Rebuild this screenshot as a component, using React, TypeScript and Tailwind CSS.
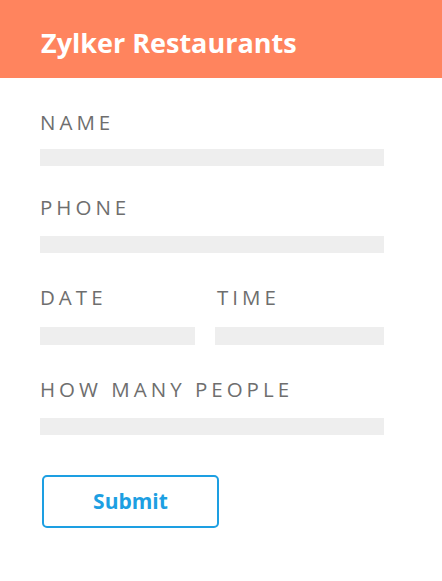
import React from "react";

function Label({ children }: { children: React.ReactNode }) {
  return (
    <div className="text-[20.5px] leading-[20px] tracking-[4px] text-[#6e6e6e] whitespace-nowrap">
      {children}
    </div>
  );
}

export default function App() {
  return (
    <div className="w-[442px] h-[581px] bg-white" style={{ fontFamily: '"Open Sans", "Liberation Sans", sans-serif' }}>
      <div className="h-[78px] bg-[#ff845e] pt-[29px] px-[41px]">
        <div className="text-white font-bold text-[27px] leading-none">Zylker Restaurants</div>
      </div>
      <div className="pl-[40px] pr-[58px]">
        <div className="pt-[34px]">
          <Label>NAME</Label>
          <div className="mt-[17px] h-[17px] bg-[#eeeeee]" />
        </div>
        <div className="pt-[31px]">
          <Label>PHONE</Label>
          <div className="mt-[19px] h-[17px] bg-[#eeeeee]" />
        </div>
        <div className="pt-[34px] flex gap-[20px]">
          <div className="w-[155px]">
            <Label>DATE</Label>
            <div className="mt-[20px] h-[18px] bg-[#eeeeee]" />
          </div>
          <div className="flex-1">
            <div className="pl-[2px]"><Label>TIME</Label></div>
            <div className="mt-[20px] h-[18px] bg-[#eeeeee]" />
          </div>
        </div>
        <div className="pt-[34px]">
          <Label>HOW MANY PEOPLE</Label>
          <div className="mt-[19px] h-[17px] bg-[#eeeeee]" />
        </div>
        <div className="pt-[40px] pl-[2px]">
          <button className="w-[177px] h-[53px] border-2 border-[#1d9fe2] rounded-[5px] text-[#1d9fe2] font-bold text-[21px] leading-none flex items-center justify-center">
            Submit
          </button>
        </div>
      </div>
    </div>
  );
}
